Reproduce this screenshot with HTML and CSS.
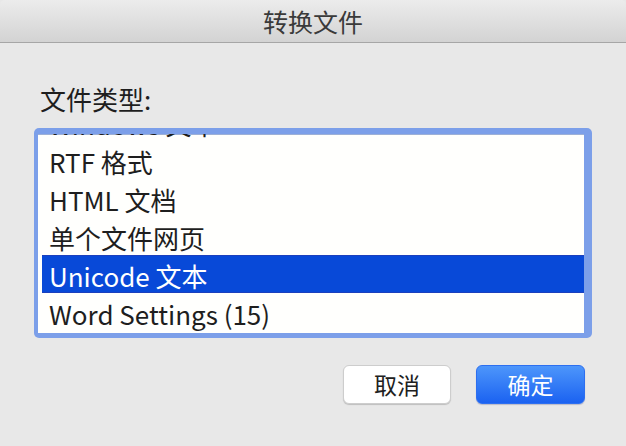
FILE: index.html
```html
<!DOCTYPE html>
<html lang="zh-CN">
<head>
<meta charset="utf-8">
<title>转换文件</title>
<link rel="stylesheet" href="styles.css">
</head>
<body>
<div class="window">
  <div class="titlebar">转换文件</div>
  <div class="content">
    <div class="label">文件类型:</div>
    <div class="listbox">
      <div class="list-viewport">
        <ul class="list">
          <li class="item">Windows 文本</li>
          <li class="item">RTF 格式</li>
          <li class="item">HTML 文档</li>
          <li class="item">单个文件网页</li>
          <li class="item selected">Unicode 文本</li>
          <li class="item">Word Settings (15)</li>
        </ul>
      </div>
    </div>
    <div class="buttons">
      <button class="btn">取消</button>
      <button class="btn primary">确定</button>
    </div>
  </div>
</div>
</body>
</html>
```

FILE: styles.css
```css
html, body {
  margin: 0;
  padding: 0;
}
body {
  width: 626px;
  height: 446px;
  overflow: hidden;
  background: #e8e8e8;
  font-family: "Noto Sans CJK SC", "Noto Sans", sans-serif;
}
.window {
  width: 626px;
  height: 446px;
  background: #e8e8e8;
}
.titlebar {
  height: 42px;
  line-height: 42px;
  text-align: center;
  font-size: 25px;
  color: #3a3a3a;
  background: linear-gradient(#ececec, #d3d3d3);
  border-bottom: 1px solid #a6a6a6;
  border-radius: 5px 5px 0 0;
}
.content {
  padding: 41px 34px 0 34px;
}
.label {
  padding-left: 6px;
  font-size: 26px;
  line-height: 30px;
  color: #1e1e1e;
}
.listbox {
  margin-top: 14px;
  height: 210px;
  box-sizing: border-box;
  padding: 6px 8px 5px 4px;
  background: #7c9fe9;
  border-radius: 5px;
}
.list-viewport {
  height: 100%;
  overflow: hidden;
  background: #fffffd;
  box-shadow: inset 0 1px 0 #9db0d6;
  padding-left: 4px;
}
.list {
  list-style: none;
  margin: -31px 0 0 0;
  padding: 0;
}
.item {
  height: 38px;
  box-sizing: border-box;
  padding: 3px 0 0 7px;
  line-height: 35px;
  font-size: 26px;
  color: #1e1e1e;
  white-space: nowrap;
}
.item.selected {
  background: #0849d8;
  color: #ffffff;
  box-shadow: inset 0 1px 0 #1c40bd, inset 0 -1px 0 #1c40bd;
}
.buttons {
  margin-top: 27px;
  padding-right: 7px;
  display: flex;
  justify-content: flex-end;
  gap: 25px;
}
.btn {
  width: 108px;
  height: 39px;
  box-sizing: border-box;
  border-radius: 6px;
  font-family: "Noto Sans CJK SC", sans-serif;
  font-size: 23px;
  line-height: 1;
  padding: 0;
  background: #ffffff;
  color: #202020;
  border: 1px solid #cdcdcd;
  box-shadow: 0 1px 1px rgba(0, 0, 0, 0.18);
}
.btn.primary {
  width: 109px;
  background: linear-gradient(#4d96fb, #1b62f1);
  color: #ffffff;
  border: 1px solid #2d6ff0;
  box-shadow: 0 1px 1px rgba(0, 0, 80, 0.2);
}
```
